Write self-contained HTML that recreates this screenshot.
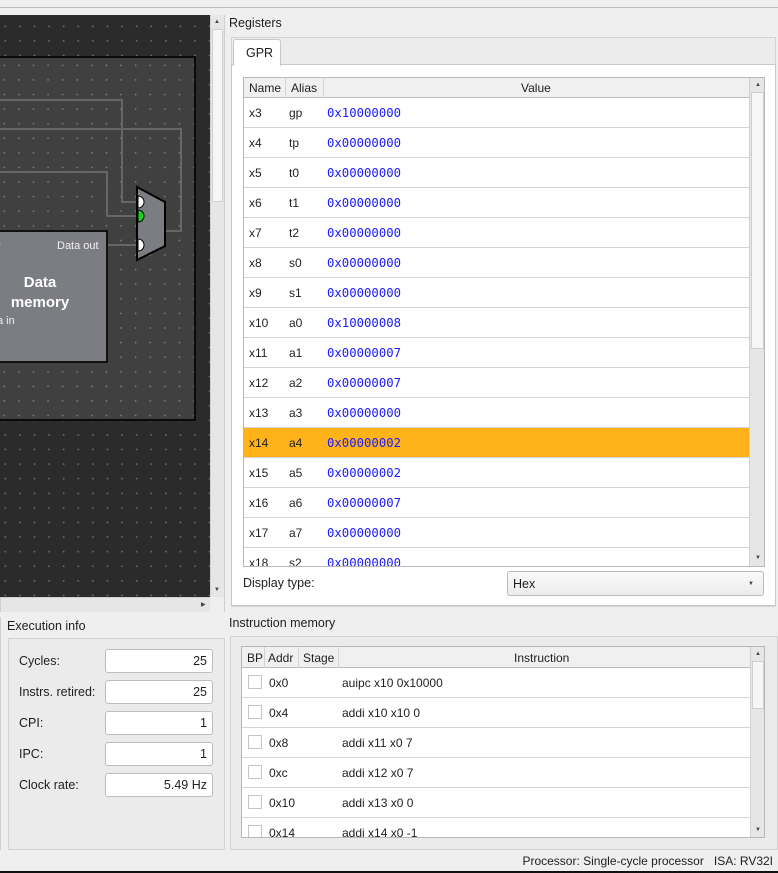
<!DOCTYPE html>
<html><head><style>
*{box-sizing:border-box;margin:0;padding:0}
body{width:778px;height:873px;overflow:hidden;background:#efefef;font-family:"Liberation Sans","DejaVu Sans",sans-serif;font-size:12px;color:#1e1e1e;position:relative}
.a{position:absolute}
.mono{font-family:"DejaVu Sans Mono","Liberation Mono",monospace;font-size:12.3px;color:#1a1aff}
.row{position:absolute;left:0;height:30px;border-bottom:1px solid #d4d4d4;width:100%;background:#fff}
.row span{position:absolute;top:8px}
.fld{position:absolute;left:105px;width:108px;height:24px;background:#fff;border:1px solid #bdbdbd;border-radius:3px;text-align:right;padding:4px 5px 0 0;font-size:12.5px}
.lbl{position:absolute;left:19px;font-size:12.5px}
.sb{position:absolute;background:#e6e6e6;border-left:1px solid #d0d0d0}
.thumb{position:absolute;left:1px;right:1px;background:#f6f6f6;border:1px solid #cfcfcf}
.ar{position:absolute;font-size:6px;color:#444}
</style></head><body>
<div class="a" style="left:0;top:7px;width:778px;height:1px;background:#bdbdbd"></div>
<!-- canvas -->
<div class="a" style="left:0;top:15px;width:210px;height:582px;background-color:#2b2b2b;background-image:radial-gradient(circle,#6e6e6e 0.7px,transparent 1px);background-size:14.6px 14.6px;background-position:-2px 4px;overflow:hidden">
<div class="a" style="left:-5px;top:41px;width:201px;height:365px;background-color:#404040;border:2px solid #0a0a0a;background-image:radial-gradient(circle,#7a7a7a 0.7px,transparent 1px);background-size:14.6px 14.6px;background-position:0px 0px"></div>
<svg class="a" style="left:0;top:0" width="210" height="582">
<g fill="none" stroke="#666" stroke-width="2">
<path d="M0 85H122V187H137"/><path d="M0 114H181V216H165"/><path d="M0 157H107V201H137"/><path d="M107 230H137"/>
</g>
<rect x="-5" y="216" width="112" height="131" fill="#7b7d82" stroke="#111" stroke-width="2"/>
<polygon points="137,172 165,187 165,231 137,245" fill="#7b7d82" stroke="#000" stroke-width="2"/>
<path d="M138 181a6 6 0 0 1 0 12z" fill="#fff" stroke="#000"/>
<path d="M138 195a6 6 0 0 1 0 12z" fill="#1ed01e" stroke="#000"/>
<path d="M138 224a6 6 0 0 1 0 12z" fill="#fff" stroke="#000"/>
<text x="57" y="234" fill="#f0f0f0" font-size="11" font-family="Liberation Sans,sans-serif">Data out</text>
<text x="-3" y="234" fill="#f0f0f0" font-size="11" font-family="Liberation Sans,sans-serif">r</text>
<text x="40" y="272" fill="#fff" font-size="15" font-weight="bold" text-anchor="middle" font-family="Liberation Sans,sans-serif">Data</text>
<text x="40" y="292" fill="#fff" font-size="15" font-weight="bold" text-anchor="middle" font-family="Liberation Sans,sans-serif">memory</text>
<text x="-3" y="309" fill="#f0f0f0" font-size="11" font-family="Liberation Sans,sans-serif">a in</text>
</svg></div>
<div class="sb" style="left:210px;top:15px;width:14px;height:582px"><div class="thumb" style="top:14px;height:173px"></div><div class="ar" style="left:3px;top:4px">▲</div><div class="ar" style="left:3px;top:572px">▼</div></div>
<div class="sb" style="left:0;top:597px;width:210px;height:15px;border-top:1px solid #d0d0d0"><div class="ar" style="left:200px;top:3px">▶</div></div>
<div class="a" style="left:224px;top:15px;width:1px;height:597px;background:#cfcfcf"></div>

<!-- registers -->
<div class="a" style="left:229px;top:16px;font-size:12.5px">Registers</div>
<div class="a" style="left:231px;top:37px;width:545px;height:570px;border:1px solid #d3d3d3;background:#ececec"></div>
<div class="a" style="left:231px;top:64px;width:545px;height:542px;border:1px solid #c8c8c8;background:#fff"></div>
<div class="a" style="left:233px;top:39px;width:48px;height:27px;border:1px solid #c8c8c8;border-bottom:none;background:#fff;border-radius:3px 3px 0 0;padding:6px 0 0 12px;font-size:12.5px">GPR</div>
<div class="a" style="left:243px;top:77px;width:522px;height:490px;border:1px solid #b8b8b8;background:#fff;overflow:hidden">
<div class="a" style="left:0;top:0;width:505px;height:20px;background:#f0f0f0;border-bottom:1px solid #bbb"></div>
<div class="a" style="left:5px;top:3px">Name</div><div class="a" style="left:47px;top:3px">Alias</div><div class="a" style="left:277px;top:3px">Value</div>
<div class="a" style="left:41px;top:0;width:1px;height:490px;background:#d4d4d4"></div>
<div class="a" style="left:79px;top:0;width:1px;height:490px;background:#d4d4d4"></div>
<div class="a" style="left:0;top:20px;width:505px;height:470px">
<div class="row" style="top:0"><span style="left:5px">x3</span><span style="left:45px">gp</span><span class="mono" style="left:83px">0x10000000</span></div>
<div class="row" style="top:30px"><span style="left:5px">x4</span><span style="left:45px">tp</span><span class="mono" style="left:83px">0x00000000</span></div>
<div class="row" style="top:60px"><span style="left:5px">x5</span><span style="left:45px">t0</span><span class="mono" style="left:83px">0x00000000</span></div>
<div class="row" style="top:90px"><span style="left:5px">x6</span><span style="left:45px">t1</span><span class="mono" style="left:83px">0x00000000</span></div>
<div class="row" style="top:120px"><span style="left:5px">x7</span><span style="left:45px">t2</span><span class="mono" style="left:83px">0x00000000</span></div>
<div class="row" style="top:150px"><span style="left:5px">x8</span><span style="left:45px">s0</span><span class="mono" style="left:83px">0x00000000</span></div>
<div class="row" style="top:180px"><span style="left:5px">x9</span><span style="left:45px">s1</span><span class="mono" style="left:83px">0x00000000</span></div>
<div class="row" style="top:210px"><span style="left:5px">x10</span><span style="left:45px">a0</span><span class="mono" style="left:83px">0x10000008</span></div>
<div class="row" style="top:240px"><span style="left:5px">x11</span><span style="left:45px">a1</span><span class="mono" style="left:83px">0x00000007</span></div>
<div class="row" style="top:270px"><span style="left:5px">x12</span><span style="left:45px">a2</span><span class="mono" style="left:83px">0x00000007</span></div>
<div class="row" style="top:300px"><span style="left:5px">x13</span><span style="left:45px">a3</span><span class="mono" style="left:83px">0x00000000</span></div>
<div class="row" style="top:330px;background:#ffb319"><span style="left:5px">x14</span><span style="left:45px">a4</span><span class="mono" style="left:83px">0x00000002</span></div>
<div class="row" style="top:360px"><span style="left:5px">x15</span><span style="left:45px">a5</span><span class="mono" style="left:83px">0x00000002</span></div>
<div class="row" style="top:390px"><span style="left:5px">x16</span><span style="left:45px">a6</span><span class="mono" style="left:83px">0x00000007</span></div>
<div class="row" style="top:420px"><span style="left:5px">x17</span><span style="left:45px">a7</span><span class="mono" style="left:83px">0x00000000</span></div>
<div class="row" style="top:450px"><span style="left:5px">x18</span><span style="left:45px">s2</span><span class="mono" style="left:83px">0x00000000</span></div>
</div>
<div class="sb" style="left:505px;top:0;width:16px;height:490px"><div class="thumb" style="top:14px;height:257px"></div><div class="ar" style="left:5px;top:4px">▲</div><div class="ar" style="left:5px;top:477px">▼</div></div>
</div>
<div class="a" style="left:243px;top:576px;font-size:12.5px">Display type:</div>
<div class="a" style="left:507px;top:571px;width:257px;height:25px;border:1px solid #bbb;border-radius:3px;background:linear-gradient(#fafafa,#ececec);padding:5px 0 0 5px;font-size:12.5px">Hex<span class="ar" style="right:9px;top:9px">▼</span></div>

<!-- execution info -->
<div class="a" style="left:0;top:617px;width:1px;height:233px;background:#cfcfcf"></div>
<div class="a" style="left:7px;top:619px;font-size:12.5px">Execution info</div>
<div class="a" style="left:8px;top:638px;width:217px;height:212px;border:1px solid #d3d3d3;background:#ebebeb"></div>
<div class="lbl" style="top:654px">Cycles:</div><div class="fld" style="top:649px">25</div>
<div class="lbl" style="top:685px">Instrs. retired:</div><div class="fld" style="top:680px">25</div>
<div class="lbl" style="top:716px">CPI:</div><div class="fld" style="top:711px">1</div>
<div class="lbl" style="top:747px">IPC:</div><div class="fld" style="top:742px">1</div>
<div class="lbl" style="top:778px">Clock rate:</div><div class="fld" style="top:773px">5.49 Hz</div>

<!-- instruction memory -->
<div class="a" style="left:229px;top:616px;font-size:12.5px">Instruction memory</div>
<div class="a" style="left:230px;top:636px;width:548px;height:214px;border:1px solid #d3d3d3;background:#ebebeb"></div>
<div class="a" style="left:241px;top:646px;width:524px;height:192px;border:1px solid #b8b8b8;background:#fff;overflow:hidden">
<div class="a" style="left:0;top:0;width:509px;height:21px;background:#f0f0f0;border-bottom:1px solid #bbb"></div>
<div class="a" style="left:5px;top:4px">BP</div><div class="a" style="left:26px;top:4px">Addr</div><div class="a" style="left:61px;top:4px">Stage</div><div class="a" style="left:272px;top:4px">Instruction</div>
<div class="a" style="left:22px;top:0;width:1px;height:192px;background:#d4d4d4"></div>
<div class="a" style="left:56px;top:0;width:1px;height:192px;background:#d4d4d4"></div>
<div class="a" style="left:96px;top:0;width:1px;height:192px;background:#d4d4d4"></div>
<div class="a" style="left:0;top:21px;width:509px;height:171px">
<div class="row" style="top:0"><span style="left:6px;top:7px;width:14px;height:14px;border:1px solid #c4c4c4;background:#fff"></span><span style="left:27px">0x0</span><span style="left:100px">auipc x10 0x10000</span></div>
<div class="row" style="top:30px"><span style="left:6px;top:7px;width:14px;height:14px;border:1px solid #c4c4c4"></span><span style="left:27px">0x4</span><span style="left:100px">addi x10 x10 0</span></div>
<div class="row" style="top:60px"><span style="left:6px;top:7px;width:14px;height:14px;border:1px solid #c4c4c4"></span><span style="left:27px">0x8</span><span style="left:100px">addi x11 x0 7</span></div>
<div class="row" style="top:90px"><span style="left:6px;top:7px;width:14px;height:14px;border:1px solid #c4c4c4"></span><span style="left:27px">0xc</span><span style="left:100px">addi x12 x0 7</span></div>
<div class="row" style="top:120px"><span style="left:6px;top:7px;width:14px;height:14px;border:1px solid #c4c4c4"></span><span style="left:27px">0x10</span><span style="left:100px">addi x13 x0 0</span></div>
<div class="row" style="top:150px"><span style="left:6px;top:7px;width:14px;height:14px;border:1px solid #c4c4c4"></span><span style="left:27px">0x14</span><span style="left:100px">addi x14 x0 -1</span></div>
</div>
<div class="sb" style="left:508px;top:0;width:15px;height:192px"><div class="thumb" style="top:14px;height:48px"></div><div class="ar" style="left:4px;top:4px">▲</div><div class="ar" style="left:4px;top:180px">▼</div></div>
</div>

<div class="a" style="right:5px;top:854px;font-size:12px">Processor: Single-cycle processor&nbsp;&nbsp; ISA: RV32I</div>
<div class="a" style="left:0;top:871px;width:778px;height:2px;background:#111"></div>
</body></html>
